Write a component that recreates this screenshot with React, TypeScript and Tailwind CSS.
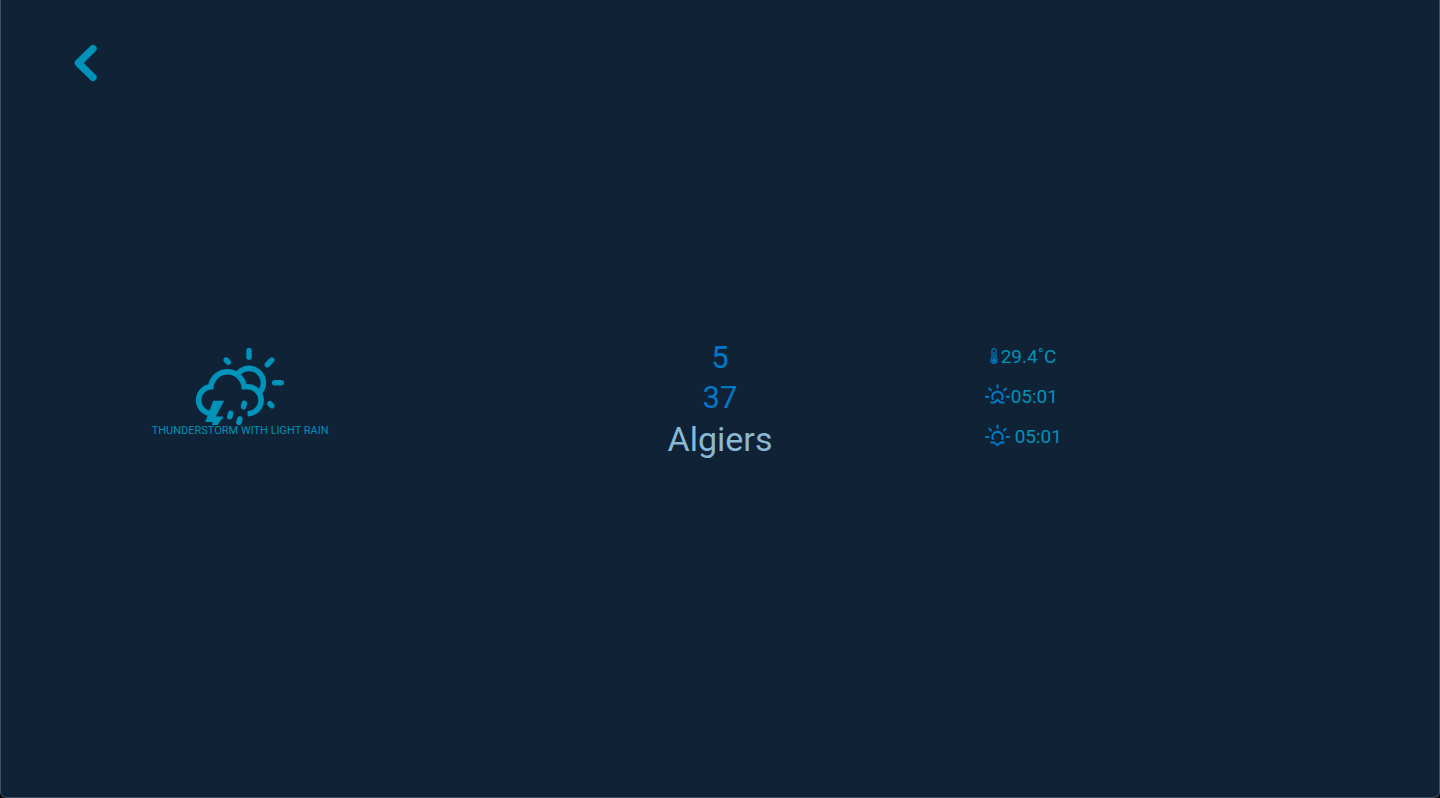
import { WiDayStormShowers, WiSunrise, WiSunset } from "react-icons/wi";

function ChevronLeft() {
  return (
    <svg viewBox="0 0 24 38" className="h-[38px] w-6" fill="none" stroke="currentColor" strokeWidth="7.4" strokeLinecap="round" strokeLinejoin="round" aria-hidden="true">
      <path d="M20 4.7 5.4 19 20 33.3" />
    </svg>
  );
}

function Thermometer() {
  return (
    <svg viewBox="0 0 8 18" className="h-[18px] w-2 text-[#007ac6]" fill="none" stroke="currentColor" strokeWidth="1.2" aria-hidden="true">
      <path d="M2 9.6V2.6a2 2 0 0 1 4 0v7a3.2 3.2 0 1 1-4 0Z" />
      <path d="M4 4v7" strokeWidth="1.2" />
      <circle cx="4" cy="12.2" r="2" fill="currentColor" stroke="none" />
    </svg>
  );
}

export default function App() {
  return (
    <div className="bg-black font-[Roboto,sans-serif]">
      <main className="relative flex min-h-screen flex-col justify-center rounded-b-md border-x border-b border-[#3d5061] bg-[#0f2236] text-[#0092b8]">
        <button type="button" aria-label="Back" className="absolute top-11 left-[72px] cursor-pointer">
          <ChevronLeft />
        </button>
        <section className="grid grid-cols-3 pb-1">
          <div className="flex flex-col items-center pt-[11px] pr-px">
            <div className="flex h-20 items-start overflow-hidden">
              <WiDayStormShowers className="size-[98px] shrink-0" />
            </div>
            <p className="text-[11px] leading-3 uppercase">thunderstorm with light rain</p>
          </div>
          <div className="flex flex-col items-center pt-1 text-[#007ac6]">
            <p className="text-[31px] leading-10">5</p>
            <p className="text-[31px] leading-10">37</p>
            <h1 className="text-[34px] leading-[42px] text-[#8bb8d4]">Algiers</h1>
          </div>
          <div className="flex flex-col pt-[3px] pl-[22px] text-[19px] leading-10">
            <p className="flex h-10 items-center gap-[3px] pl-2">
              <Thermometer />
              29.4˚C
            </p>
            <p className="flex h-10 items-center">
              <WiSunrise className="-mr-0.5 size-[31px] text-[#007ac6]" />
              05:01
            </p>
            <p className="flex h-10 items-center gap-1">
              <WiSunset className="-mr-0.5 size-[31px] text-[#007ac6]" />
              05:01
            </p>
          </div>
        </section>
      </main>
    </div>
  );
}
